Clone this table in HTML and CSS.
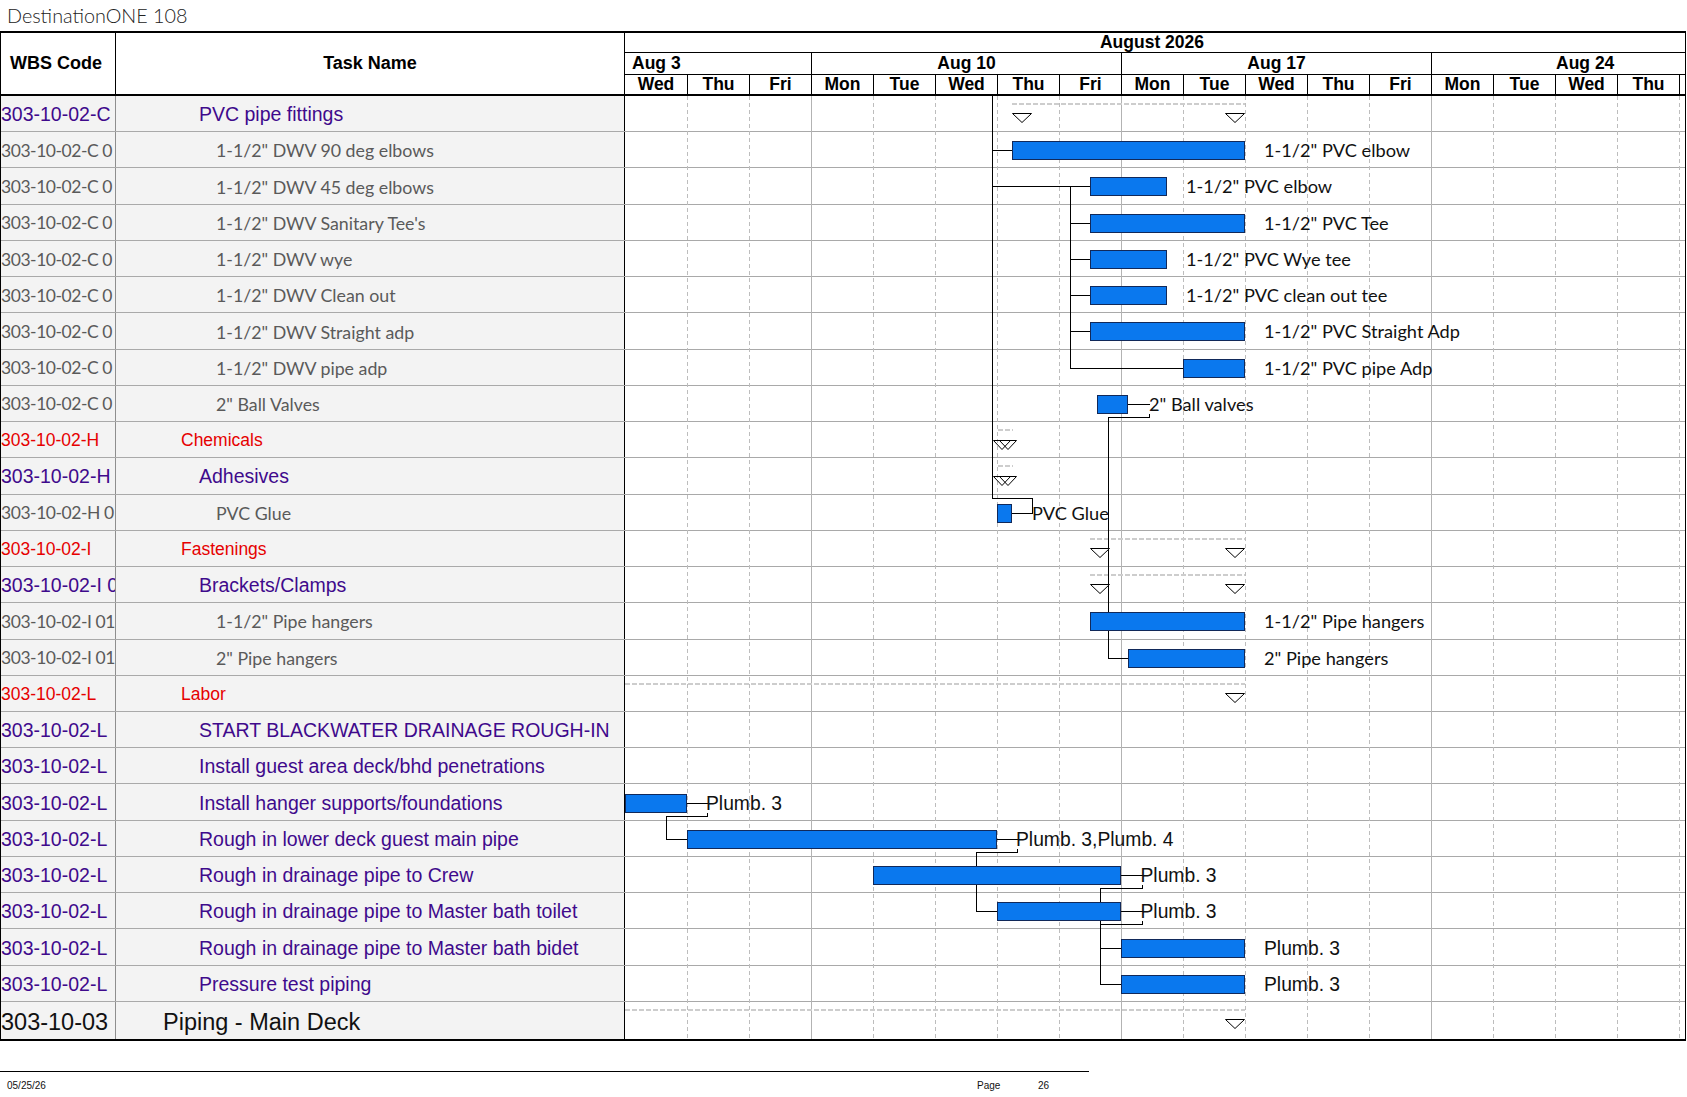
FILE: index.html
```html
<!DOCTYPE html>
<html>
<head>
<meta charset="utf-8">
<title>DestinationONE 108</title>
<link rel="stylesheet" href="styles.css">
</head>
<body>
<div class="title">DestinationONE 108</div>
<div class="gantt">
  <div class="ghead">
    <div class="lhead">
      <div class="hw">WBS Code</div>
      <div class="hn">Task Name</div>
    </div>
    <div class="chead">
      <div class="month">August 2026</div>
      <div class="weeks">
        <div class="wk a3">Aug 3</div>
        <div class="wk a10">Aug 10</div>
        <div class="wk a17">Aug 17</div>
        <div class="wk a24">Aug 24</div>
      </div>
      <div class="days">
        <div class="day">Wed</div><div class="day">Thu</div><div class="day">Fri</div>
        <div class="day">Mon</div><div class="day">Tue</div><div class="day">Wed</div><div class="day">Thu</div><div class="day">Fri</div>
        <div class="day">Mon</div><div class="day">Tue</div><div class="day">Wed</div><div class="day">Thu</div><div class="day">Fri</div>
        <div class="day">Mon</div><div class="day">Tue</div><div class="day">Wed</div><div class="day">Thu</div>
        <div class="filler"></div>
      </div>
    </div>
  </div>
  <div class="gbody">
    <div class="row l2"><div class="w">303-10-02-C</div><div class="n">PVC pipe fittings</div><div class="c"></div></div>
    <div class="row l3"><div class="w">303-10-02-C 0</div><div class="n">1-1/2" DWV 90 deg elbows</div><div class="c"></div></div>
    <div class="row l3"><div class="w">303-10-02-C 0</div><div class="n">1-1/2" DWV 45 deg elbows</div><div class="c"></div></div>
    <div class="row l3"><div class="w">303-10-02-C 0</div><div class="n">1-1/2" DWV Sanitary Tee's</div><div class="c"></div></div>
    <div class="row l3"><div class="w">303-10-02-C 0</div><div class="n">1-1/2" DWV wye</div><div class="c"></div></div>
    <div class="row l3"><div class="w">303-10-02-C 0</div><div class="n">1-1/2" DWV Clean out</div><div class="c"></div></div>
    <div class="row l3"><div class="w">303-10-02-C 0</div><div class="n">1-1/2" DWV Straight adp</div><div class="c"></div></div>
    <div class="row l3"><div class="w">303-10-02-C 0</div><div class="n">1-1/2" DWV pipe adp</div><div class="c"></div></div>
    <div class="row l3"><div class="w">303-10-02-C 0</div><div class="n">2" Ball Valves</div><div class="c"></div></div>
    <div class="row l1"><div class="w">303-10-02-H</div><div class="n">Chemicals</div><div class="c"></div></div>
    <div class="row l2"><div class="w">303-10-02-H</div><div class="n">Adhesives</div><div class="c"></div></div>
    <div class="row l3"><div class="w">303-10-02-H 0</div><div class="n">PVC Glue</div><div class="c"></div></div>
    <div class="row l1"><div class="w">303-10-02-I</div><div class="n">Fastenings</div><div class="c"></div></div>
    <div class="row l2"><div class="w">303-10-02-I 01</div><div class="n">Brackets/Clamps</div><div class="c"></div></div>
    <div class="row l3"><div class="w">303-10-02-I 01</div><div class="n">1-1/2" Pipe hangers</div><div class="c"></div></div>
    <div class="row l3"><div class="w">303-10-02-I 01</div><div class="n">2" Pipe hangers</div><div class="c"></div></div>
    <div class="row l1"><div class="w">303-10-02-L</div><div class="n">Labor</div><div class="c"></div></div>
    <div class="row l2"><div class="w">303-10-02-L</div><div class="n">START BLACKWATER DRAINAGE ROUGH-IN</div><div class="c"></div></div>
    <div class="row l2"><div class="w">303-10-02-L</div><div class="n">Install guest area deck/bhd penetrations</div><div class="c"></div></div>
    <div class="row l2"><div class="w">303-10-02-L</div><div class="n">Install hanger supports/foundations</div><div class="c"></div></div>
    <div class="row l2"><div class="w">303-10-02-L</div><div class="n">Rough in lower deck guest main pipe</div><div class="c"></div></div>
    <div class="row l2"><div class="w">303-10-02-L</div><div class="n">Rough in drainage pipe to Crew</div><div class="c"></div></div>
    <div class="row l2"><div class="w">303-10-02-L</div><div class="n">Rough in drainage pipe to Master bath toilet</div><div class="c"></div></div>
    <div class="row l2"><div class="w">303-10-02-L</div><div class="n">Rough in drainage pipe to Master bath bidet</div><div class="c"></div></div>
    <div class="row l2"><div class="w">303-10-02-L</div><div class="n">Pressure test piping</div><div class="c"></div></div>
    <div class="row l0 last"><div class="w">303-10-03</div><div class="n">Piping - Main Deck</div><div class="c"></div></div>

    <svg class="overlay" width="1060" height="943" viewBox="0 0 1060 943">
      <g class="gday">
        <line x1="62.5" y1="0" x2="62.5" y2="943"/>
        <line x1="124.5" y1="0" x2="124.5" y2="943"/>
        <line x1="248.5" y1="0" x2="248.5" y2="943"/>
        <line x1="310.5" y1="0" x2="310.5" y2="943"/>
        <line x1="372.5" y1="0" x2="372.5" y2="943"/>
        <line x1="434.5" y1="0" x2="434.5" y2="943"/>
        <line x1="558.5" y1="0" x2="558.5" y2="943"/>
        <line x1="620.5" y1="0" x2="620.5" y2="943"/>
        <line x1="682.5" y1="0" x2="682.5" y2="943"/>
        <line x1="744.5" y1="0" x2="744.5" y2="943"/>
        <line x1="868.5" y1="0" x2="868.5" y2="943"/>
        <line x1="930.5" y1="0" x2="930.5" y2="943"/>
        <line x1="992.5" y1="0" x2="992.5" y2="943"/>
        <line x1="1054.5" y1="0" x2="1054.5" y2="943"/>
      </g>
      <g class="gweek">
        <line x1="186.5" y1="0" x2="186.5" y2="943"/>
        <line x1="496.5" y1="0" x2="496.5" y2="943"/>
        <line x1="806.5" y1="0" x2="806.5" y2="943"/>
      </g>
      <g class="sumline">
        <line x1="387" y1="7.5" x2="620" y2="7.5"/>
        <line x1="373" y1="333.5" x2="388" y2="333.5"/>
        <line x1="373" y1="369.5" x2="388" y2="369.5"/>
        <line x1="465" y1="442.5" x2="620" y2="442.5"/>
        <line x1="465" y1="478.5" x2="620" y2="478.5"/>
        <line x1="0" y1="587.5" x2="620" y2="587.5"/>
        <line x1="0" y1="913.5" x2="620" y2="913.5"/>
      </g>
      <path class="link" d="M367.5 0V402.5H407.5V417.5H387M367.5 54.5H387M367.5 90.5H465"/>
      <path class="link" d="M445.5 90.5V272.5M445.5 127.5H465M445.5 163.5H465M445.5 199.5H465M445.5 235.5H465M445.5 272.5H558"/>
      <path class="link" d="M503 308.5H524.5M524.5 317.5V321.5H483.5V562.5H503"/>
      <path class="link" d="M62 707.5H82.5M82.5 716.5V720.5H41.5V743.5H62"/>
      <path class="link" d="M372 743.5H392.5M392.5 752.5V756.5H351.5V815.5H372"/>
      <path class="link" d="M496 779.5H517.5M517.5 788.5V792.5H475.5V888.5H496M475.5 852.5H496"/>
      <path class="link" d="M496 815.5H517.5M517.5 824.5V828.5H475.5"/>
      <g class="tri">
        <polygon points="387.5,17.5 406.5,17.5 397,26.5"/>
        <polygon points="600.5,17.5 619.5,17.5 610,26.5"/>
        <polygon points="465.5,452.5 484.5,452.5 475,461.5"/>
        <polygon points="600.5,452.5 619.5,452.5 610,461.5"/>
        <polygon points="465.5,488.5 484.5,488.5 475,497.5"/>
        <polygon points="600.5,488.5 619.5,488.5 610,497.5"/>
        <polygon points="600.5,597.5 619.5,597.5 610,606.5"/>
        <polygon points="600.5,923.5 619.5,923.5 610,932.5"/>
      </g>
      <g class="tri2">
        <polygon points="368.5,344.5 385.5,344.5 377,353.5"/>
        <polygon points="374.5,344.5 391.5,344.5 383,353.5"/>
        <polygon points="368.5,380.5 385.5,380.5 377,389.5"/>
        <polygon points="374.5,380.5 391.5,380.5 383,389.5"/>
      </g>
      <g class="bar">
        <rect x="387.5" y="45.5" width="232" height="18"/>
        <rect x="465.5" y="81.5" width="76" height="18"/>
        <rect x="465.5" y="118.5" width="154" height="18"/>
        <rect x="465.5" y="154.5" width="76" height="18"/>
        <rect x="465.5" y="190.5" width="76" height="18"/>
        <rect x="465.5" y="226.5" width="154" height="18"/>
        <rect x="558.5" y="263.5" width="61" height="18"/>
        <rect x="472.5" y="299.5" width="30" height="18"/>
        <rect x="372.5" y="408.5" width="14" height="18"/>
        <rect x="465.5" y="516.5" width="154" height="18"/>
        <rect x="503.5" y="553.5" width="116" height="18"/>
        <rect x="0.5" y="698.5" width="61" height="18"/>
        <rect x="62.5" y="734.5" width="309" height="18"/>
        <rect x="248.5" y="770.5" width="247" height="18"/>
        <rect x="372.5" y="806.5" width="123" height="18"/>
        <rect x="496.5" y="843.5" width="123" height="18"/>
        <rect x="496.5" y="879.5" width="123" height="18"/>
      </g>
      <g class="lbl">
        <text x="639" y="61">1-1/2" PVC elbow</text>
        <text x="561" y="97">1-1/2" PVC elbow</text>
        <text x="639" y="134">1-1/2" PVC Tee</text>
        <text x="561" y="170">1-1/2" PVC Wye tee</text>
        <text x="561" y="206">1-1/2" PVC clean out tee</text>
        <text x="639" y="242">1-1/2" PVC Straight Adp</text>
        <text x="639" y="279">1-1/2" PVC pipe Adp</text>
        <text x="524" y="315">2" Ball valves</text>
        <text x="407" y="424">PVC Glue</text>
        <text x="639" y="532">1-1/2" Pipe hangers</text>
        <text x="639" y="569">2" Pipe hangers</text>
      </g>
      <g class="lbl2">
        <text x="81" y="714.3">Plumb. 3</text>
        <text x="391" y="750.3">Plumb. 3,Plumb. 4</text>
        <text x="515.5" y="786.3">Plumb. 3</text>
        <text x="515.5" y="822.3">Plumb. 3</text>
        <text x="639" y="859.3">Plumb. 3</text>
        <text x="639" y="895.3">Plumb. 3</text>
      </g>
    </svg>
  </div>
</div>
<div class="footer">
  <div class="fdate">05/25/26</div>
  <div class="fpage">Page</div>
  <div class="fnum">26</div>
</div>
</body>
</html>
```
FILE: styles.css
```css
html, body {
  margin: 0;
  padding: 0;
  background: #ffffff;
}
body {
  width: 1687px;
  height: 1097px;
  overflow: hidden;
  font-family: "Liberation Sans", Arial, sans-serif;
  color: #000;
}

.title {
  height: 31px;
  line-height: 30px;
  padding-left: 7px;
  font-family: Lato, "Open Sans", sans-serif;
  font-weight: 300;
  font-size: 19.8px;
  color: #222;
  white-space: nowrap;
}

.gantt {
  width: 1686px;
  box-sizing: border-box;
  border-top: 2px solid #000;
  border-bottom: 2px solid #000;
  border-left: 1px solid #000;
  border-right: 1px solid #000;
  background: #fff;
}

/* ---------- header ---------- */
.ghead {
  display: flex;
  height: 63px;
  box-sizing: border-box;
  border-bottom: 2px solid #000;
  font-family: "Liberation Sans", Arial, sans-serif;
  font-weight: bold;
}
.lhead {
  display: flex;
  width: 624px;
  flex: none;
}
.hw {
  width: 115px;
  box-sizing: border-box;
  border-right: 1px solid #000;
  display: flex;
  align-items: center;
  padding-left: 9px;
  font-size: 18px;
}
.hn {
  width: 509px;
  box-sizing: border-box;
  border-right: 1px solid #000;
  display: flex;
  align-items: center;
  justify-content: center;
  font-size: 18px;
}
.chead {
  flex: 1;
  display: flex;
  flex-direction: column;
  font-size: 17.5px;
}
.month {
  height: 20px;
  box-sizing: border-box;
  border-bottom: 1px solid #000;
  text-align: center;
  line-height: 19px;
  padding-right: 6px;
}
.weeks {
  display: flex;
  height: 22px;
  box-sizing: border-box;
  border-bottom: 1px solid #000;
}
.wk {
  box-sizing: border-box;
  line-height: 21px;
  white-space: nowrap;
  overflow: hidden;
}
.wk + .wk {
  border-left: 1px solid #000;
}
.a3 {
  width: 186px;
  padding-left: 7px;
}
.a10, .a17 {
  width: 310px;
  text-align: center;
}
.a24 {
  flex: 1;
  padding-left: 124px;
}
.days {
  display: flex;
  height: 19px;
}
.day {
  width: 62px;
  flex: none;
  box-sizing: border-box;
  text-align: center;
  line-height: 19px;
}
.day + .day, .filler {
  border-left: 1px solid #000;
}
.filler {
  flex: 1;
}

/* ---------- body ---------- */
.gbody {
  position: relative;
}
.row {
  display: flex;
  height: 36.24px;
  box-sizing: border-box;
  border-bottom: 1px solid #a9a9a9;
}
.row.last {
  height: 37px;
  border-bottom: none;
}
.row .w {
  width: 115px;
  flex: none;
  box-sizing: border-box;
  border-right: 1px solid #8e8e8e;
  background: #f3f3f3;
  overflow: hidden;
  white-space: nowrap;
  display: flex;
  align-items: center;
}
.row .n {
  width: 509px;
  flex: none;
  box-sizing: border-box;
  border-right: 1px solid #000;
  background: #f3f3f3;
  overflow: hidden;
  white-space: nowrap;
  display: flex;
  align-items: center;
}
.row .c {
  flex: 1;
}

.l0 {
  font-family: "Liberation Sans", Arial, sans-serif;
  font-size: 23.5px;
  color: #111;
}
.l0 .w, .l0 .n { padding-top: 4px; }
.l0 .n { padding-left: 47px; }

.l1 {
  font-family: "Liberation Sans", Arial, sans-serif;
  font-size: 17.5px;
  color: #e60000;
}
.l1 .n { padding-left: 65px; }
.l1 .w, .l1 .n { padding-top: 2px; }

.l2 {
  font-family: "Liberation Sans", Arial, sans-serif;
  font-size: 19.5px;
  color: #3f0a8c;
}
.l2 .n { padding-left: 83px; }
.l2 .w, .l2 .n { padding-top: 2px; }

.l3 {
  font-family: Lato, "Open Sans", sans-serif;
  font-size: 17.8px;
  color: #5a5a5a;
}
.l3 .w, .l3 .n { padding-top: 1px; }
.l3 .w {
  font-size: 17.5px;
  letter-spacing: -0.45px;
}
.l3 .n { padding-left: 100px; }

/* ---------- chart overlay ---------- */
.overlay {
  position: absolute;
  left: 624px;
  top: 0;
  display: block;
}
.gday line {
  stroke: #bdbdbd;
  stroke-width: 1;
  stroke-dasharray: 4 3;
  shape-rendering: crispEdges;
}
.gweek line {
  stroke: #b3b3b3;
  stroke-width: 1;
  shape-rendering: crispEdges;
}
.sumline line {
  stroke: #cdcdcd;
  stroke-width: 2;
  stroke-dasharray: 5 2;
  shape-rendering: crispEdges;
}
.link {
  fill: none;
  stroke: #000;
  stroke-width: 1;
  shape-rendering: crispEdges;
}
.tri polygon {
  fill: #fff;
  stroke: #000;
  stroke-width: 1;
}
.tri2 polygon {
  fill: none;
  stroke: #000;
  stroke-width: 1;
}
.bar rect {
  fill: #0a78ee;
  stroke: #11295a;
  stroke-width: 1;
  shape-rendering: crispEdges;
}
.lbl text {
  font-family: Lato, "Open Sans", sans-serif;
  font-size: 18.2px;
  fill: #111;
}
.lbl2 text {
  font-family: "Liberation Sans", Arial, sans-serif;
  font-size: 19.3px;
  fill: #111;
}

/* ---------- footer ---------- */
.footer {
  margin-top: 30px;
  width: 1089px;
  box-sizing: border-box;
  border-top: 1px solid #000;
  display: grid;
  grid-template-columns: 970px 61px auto;
  padding-left: 7px;
  padding-top: 8px;
  font-family: "Liberation Sans", Arial, sans-serif;
  font-size: 10px;
  line-height: 12px;
  color: #111;
}
```
